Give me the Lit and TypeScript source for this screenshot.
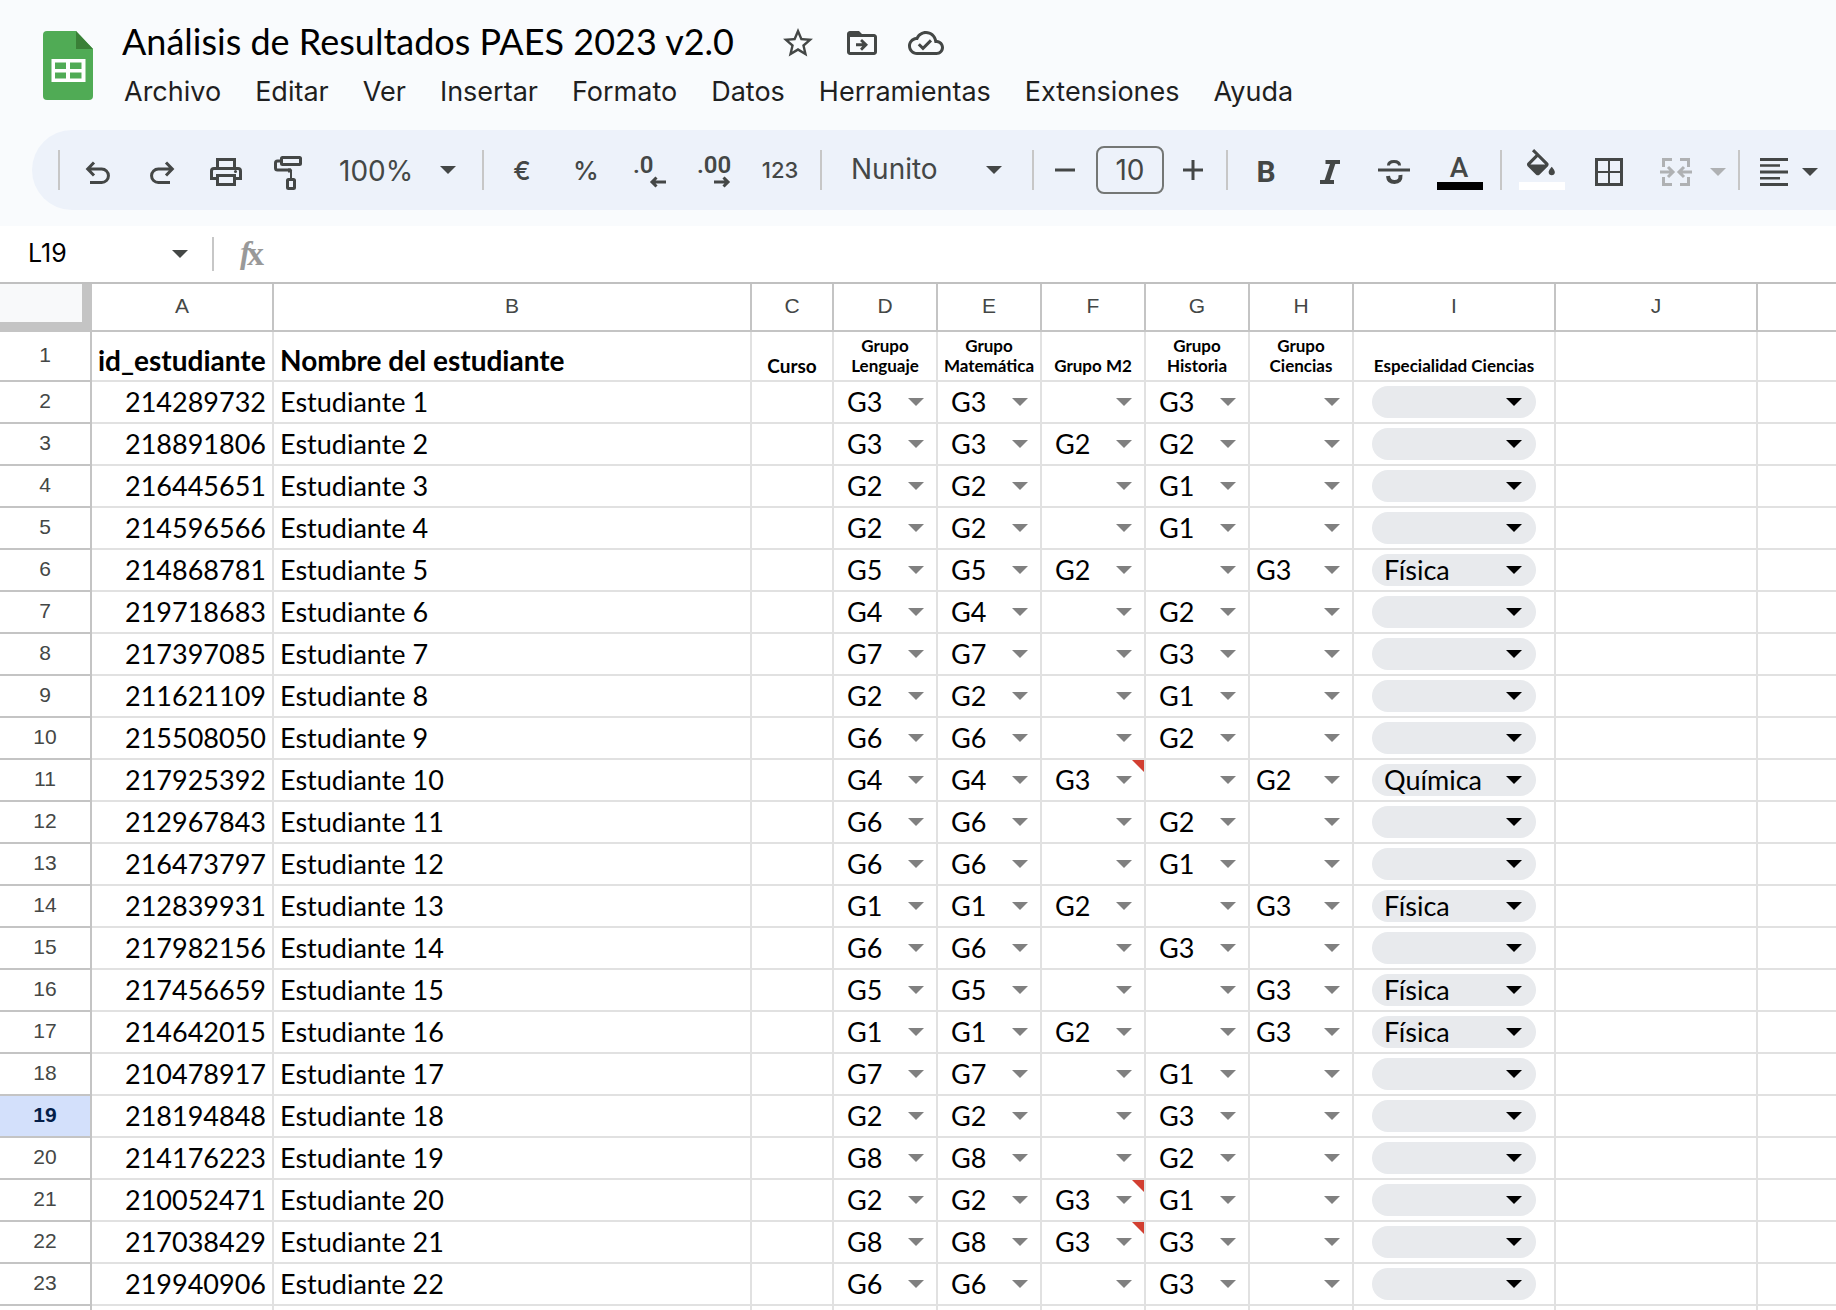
import { LitElement, html, svg, css, nothing, TemplateResult } from "lit";
import { classMap } from "lit/directives/class-map.js";

type Row = {
  id: string;
  groups: [string, string, string, string, string];
  chip: string;
  noted?: boolean;
};

const row = (id: string, l: string, m: string, m2: string, h: string, c: string, chip = "", noted = false): Row => ({
  id,
  groups: [l, m, m2, h, c],
  chip,
  noted,
});

const ROWS: Row[] = [
  row("214289732", "G3", "G3", "", "G3", ""),
  row("218891806", "G3", "G3", "G2", "G2", ""),
  row("216445651", "G2", "G2", "", "G1", ""),
  row("214596566", "G2", "G2", "", "G1", ""),
  row("214868781", "G5", "G5", "G2", "", "G3", "Física"),
  row("219718683", "G4", "G4", "", "G2", ""),
  row("217397085", "G7", "G7", "", "G3", ""),
  row("211621109", "G2", "G2", "", "G1", ""),
  row("215508050", "G6", "G6", "", "G2", ""),
  row("217925392", "G4", "G4", "G3", "", "G2", "Química", true),
  row("212967843", "G6", "G6", "", "G2", ""),
  row("216473797", "G6", "G6", "", "G1", ""),
  row("212839931", "G1", "G1", "G2", "", "G3", "Física"),
  row("217982156", "G6", "G6", "", "G3", ""),
  row("217456659", "G5", "G5", "", "", "G3", "Física"),
  row("214642015", "G1", "G1", "G2", "", "G3", "Física"),
  row("210478917", "G7", "G7", "", "G1", ""),
  row("218194848", "G2", "G2", "", "G3", ""),
  row("214176223", "G8", "G8", "", "G2", ""),
  row("210052471", "G2", "G2", "G3", "G1", "", "", true),
  row("217038429", "G8", "G8", "G3", "G3", "", "", true),
  row("219940906", "G6", "G6", "", "G3", ""),
];

const MENUS = ["Archivo", "Editar", "Ver", "Insertar", "Formato", "Datos", "Herramientas", "Extensiones", "Ayuda"];
const COLUMNS = ["A", "B", "C", "D", "E", "F", "G", "H", "I", "J"];
const GROUP_NAMES = ["Grupo Lenguaje", "Grupo Matemática", "Grupo M2", "Grupo Historia", "Grupo Ciencias"];

const arrowDown = html`<svg class="caret" viewBox="0 0 16 8" aria-hidden="true"><path d="M0 0H16L8 8Z" /></svg>`;

/* Toolbar icons share a 40 x 40 canvas. */
const icons: Record<string, TemplateResult> = {
  undo: svg`<path class="line" d="M16 12.5 9.7 19 16 25.5M10 19H23.7a6.7 6.7 0 0 1 0 13.5H12" />`,
  redo: svg`<path class="line" d="M24 12.5 30.3 19 24 25.5M30 19H16.3a6.7 6.7 0 0 0 0 13.5H28" />`,
  print: svg`<path class="line" d="M11.5 18V9.5h17V18M10 28.5H5.5V21q0-2.5 2.5-2.5H32q2.5 0 2.5 2.5v7.500H30M11.5 25.500h17v9h-17z" /><circle cx="29.500" cy="21.500" r="1.500" />`,
  paint: svg`<rect class="line" x="11.5" y="7.500" width="19" height="7" rx="1" /><path class="line" d="M10.500 11H7.500q-2 0-2 2v5q0 2 2 2H21" /><path d="M20 20h2v9h-2z" /><path d="M18 18.500h2q2 0 2 2v2h-4z" /><rect class="line" x="17.500" y="29.500" width="7" height="9" rx="1" />`,
  decLess: svg`<text class="dec" x="3" y="23">.0</text><path class="line" d="M36 32H22M26.500 27.500 22 32l4.500 4.500" />`,
  decMore: svg`<text class="dec" x="3" y="23">.00</text><path class="line" d="M20 32H34M29.500 27.500 34 32l-4.500 4.500" />`,
  minus: svg`<path d="M10 18.500h20v3H10z" />`,
  plus: svg`<path d="M8 18.500h8.500V10h3v8.500H28v3h-8.500V30h-3v-8.500H8z" />`,
  bold: svg`<text class="bold" x="20" y="32">B</text>`,
  italic: svg`<path d="M15.500 10H30v4h-4.700l-5.300 16H24v4H10v-4h4.700L20 14h-4.500z" />`,
  strike: svg`<path d="M4 18.500h32v3H4z" /><path class="line" d="M14.500 15.500q0-4 5.500-4t5.500 4" /><path class="line wide" d="M14 26q.5 6 6.500 6 6.500 0 6-7" />`,
  textColor: svg`<text class="letter" x="19" y="27">A</text><path class="ink" d="M-3 32h46v8H-3z" />`,
  fill: svg`<path transform="translate(.3 -1) scale(1.55)" d="M16.560 8.940 7.620 0 6.210 1.410l2.380 2.380-5.150 5.150c-.59.59-.59 1.540 0 2.120l5.500 5.500c.29.29.68.44 1.060.44s.77-.15 1.060-.44l5.500-5.500c.59-.58.59-1.530 0-2.120zM5.210 10 10 5.210 14.790 10zM19 11.500s-2 2.170-2 3.500c0 1.100.9 2 2 2s2-.9 2-2c0-1.330-2-3.500-2-3.500z" /><path class="paper" d="M-3 32h46v8H-3z" />`,
  borders: svg`<path class="line" d="M7.500 9.500h25v25h-25z" /><path class="line thin" d="M20 9.500v25M7.500 22h25" />`,
  merge: svg`<path class="line" d="M16 9.500H7.500V17M7.500 27v7.500H16M24 9.500h8.500V17M32.500 27v7.500H24M4 22h12M12 17l5 5-5 5M36 22H24M28 17l-5 5 5 5" />`,
  align: svg`<path d="M6 8h28v3H6zM6 14.200h20v2.600H6zM6 20.500h28v3H6zM6 27h20v2.600H6zM6 33h28v3H6z" />`,
};

class AppRoot extends LitElement {
  static styles = css`
    :host {
      display: flex;
      flex-direction: column;
      height: 100vh;
      overflow: hidden;
      background: #fff;
      color: #000;
      font-family: Inter, "Liberation Sans", sans-serif;
    }
    * {
      box-sizing: border-box;
    }
    button,
    select,
    input {
      margin: 0;
      padding: 0;
      border: 0;
      background: none;
      color: inherit;
      font: inherit;
      appearance: none;
      outline: none;
    }
    svg {
      display: block;
      flex: none;
      fill: currentColor;
    }
    .top {
      flex: none;
      padding: 20px 0 16px;
      background: #f9fbfd;
    }
    .header {
      display: flex;
      height: 110px;
      padding-left: 42px;
    }
    .logo {
      width: 52px;
      height: 70px;
      margin-top: 11px;
    }
    .heading {
      margin-left: 28px;
    }
    .title-row {
      display: flex;
      align-items: center;
      gap: 28px;
      height: 46px;
      color: #444746;
    }
    .title {
      width: 630px;
      padding-bottom: 4px;
      color: #000;
      font: 36px/44px Lato, sans-serif;
    }
    .title-icon {
      width: 36px;
      height: 36px;
    }
    .menu {
      display: flex;
      margin-left: -15px;
      color: #1f1f1f;
      font-size: 27px;
      line-height: 52px;
    }
    .menu button {
      padding: 0 17px;
    }
    .toolbar {
      display: flex;
      align-items: center;
      height: 80px;
      margin-left: 32px;
      padding-left: 20px;
      overflow: hidden;
      border-radius: 40px 0 0 40px;
      background: #edf2fa;
      color: #444746;
      font-size: 28px;
    }
    .rule {
      flex: none;
      width: 2px;
      height: 40px;
      margin: 0 6px;
      background: #c7c7c7;
    }
    .tool {
      display: flex;
      flex: none;
      align-items: center;
      justify-content: center;
      width: 64px;
      height: 80px;
    }
    .tool.medium {
      width: 66px;
    }
    .tool.roomy {
      width: 68px;
    }
    .tool.snug {
      width: 56px;
    }
    .tool.close {
      width: 50px;
    }
    .tool.drop {
      justify-content: flex-start;
      width: 22px;
      padding-top: 4px;
    }
    .tool.small {
      font-size: 22px;
      font-weight: 500;
    }
    .tool.sign {
      font-size: 26px;
      font-weight: 500;
    }
    .tool.off {
      color: #afb1b3;
    }
    .icon {
      width: 40px;
      height: 40px;
      overflow: visible;
    }
    .line {
      fill: none;
      stroke: currentColor;
      stroke-width: 3;
    }
    .line.thin {
      stroke-width: 2;
    }
    .line.wide {
      stroke-width: 4;
    }
    .ink {
      fill: #000;
    }
    .paper {
      fill: #fff;
    }
    .dec {
      font: 600 24px Roboto, sans-serif;
    }
    .bold {
      font: 700 30px Roboto, sans-serif;
      text-anchor: middle;
    }
    .letter {
      font: 500 28px Roboto, sans-serif;
      text-anchor: middle;
    }
    .combo {
      display: grid;
      flex: none;
      align-items: center;
      grid-template-columns: 1fr;
    }
    .combo > * {
      grid-area: 1 / 1;
    }
    .combo select {
      width: 100%;
    }
    .combo .caret {
      justify-self: end;
      pointer-events: none;
    }
    .caret {
      width: 16px;
      height: 8px;
    }
    .zoom {
      width: 154px;
    }
    .zoom select {
      padding: 2px 0 0 17px;
    }
    .zoom .caret {
      margin-right: 20px;
    }
    .font {
      width: 198px;
    }
    .font select {
      padding: 0 0 2px 23px;
    }
    .font .caret {
      margin-right: 24px;
    }
    .size {
      width: 68px;
      height: 48px;
      margin: 0 6px;
      border: 2px solid #747775;
      border-radius: 8px;
      text-align: center;
    }
    .formula {
      display: flex;
      flex: none;
      align-items: center;
      height: 56px;
      padding-left: 28px;
      color: #444746;
    }
    .name {
      width: 144px;
      padding-bottom: 2px;
      color: #000;
      font-size: 25px;
    }
    .name-drop {
      width: 34px;
    }
    .formula .rule {
      height: 34px;
    }
    .fx-icon {
      width: 40px;
      height: 40px;
      margin-left: 10px;
      overflow: visible;
      color: #999;
    }
    .fx-f {
      font: italic 700 32px "Liberation Serif", serif;
    }
    .fx-x {
      font: 700 34px "Liberation Serif", serif;
    }
    .entry {
      flex: 1;
      height: 40px;
      font-size: 24px;
    }
    .sheet {
      flex: 1;
      min-height: 0;
      overflow: hidden;
      border-top: 2px solid #c0c0c0;
    }
    table {
      width: 100%;
      table-layout: fixed;
      border-collapse: separate;
      border-spacing: 0;
      font: 27px/40px Lato, sans-serif;
    }
    th,
    td {
      height: 42px;
      padding: 0;
      border: solid #e1e1e1;
      border-width: 0 2px 2px 0;
      overflow: hidden;
      white-space: nowrap;
      font-weight: 400;
      text-align: left;
    }
    .c-head {
      width: 92px;
    }
    .c-id {
      width: 182px;
    }
    .c-name {
      width: 478px;
    }
    .c-curso {
      width: 82px;
    }
    .c-group {
      width: 104px;
    }
    .c-wide {
      width: 202px;
    }
    .letters th,
    .num {
      border-color: #c4c4c4;
      color: #444746;
      font: 21px/38px "Liberation Sans", sans-serif;
      text-align: center;
    }
    .letters th {
      height: 48px;
      padding-bottom: 2px;
    }
    th:last-child,
    td:last-child {
      border-right-width: 0;
    }
    .letters .corner {
      padding: 0;
      border-width: 0 10px 10px 0;
      background: #f8f9fa;
    }
    .num {
      padding-bottom: 2px;
    }
    .num.current {
      background: #d3e0fb;
      color: #041e49;
      font-weight: 700;
    }
    .titles td {
      height: 50px;
      padding: 0 6px;
      font-size: 28px;
      font-weight: 700;
      vertical-align: bottom;
    }
    .titles .mini {
      padding: 0 0 4px;
      font: 700 17px/20px Lato, sans-serif;
      text-align: center;
      white-space: normal;
    }
    .titles .mini.curso {
      font-size: 19px;
    }
    .titles .mini.group {
      padding: 0 5px 4px;
    }
    .id {
      padding-right: 6px;
      text-align: right;
    }
    .student {
      padding-left: 6px;
    }
    .cell {
      position: relative;
    }
    .cell select {
      height: 40px;
      padding-left: 13px;
      line-height: 40px;
    }
    .cell.start select {
      padding-left: 6px;
    }
    .cell .caret {
      margin-right: 12px;
      color: #808080;
    }
    .cell.noted::after {
      content: "";
      position: absolute;
      top: 0;
      right: 0;
      width: 12px;
      height: 12px;
      background: #d23f31;
      clip-path: polygon(0 0, 100% 0, 100% 100%);
    }
    .chip {
      margin: 0 18px;
      border-radius: 16px;
      background: #e8eaed;
    }
    .chip select {
      height: 32px;
      padding-left: 12px;
      line-height: 32px;
    }
    .chip .caret {
      margin-right: 14px;
    }
  `;

  private tool(name: string, label: string, extra = "") {
    return html`<button class="tool ${extra}" aria-label=${label}>
      <svg class="icon" viewBox="0 0 40 40" aria-hidden="true">${icons[name]}</svg>
    </button>`;
  }

  private rule() {
    return html`<span class="rule"></span>`;
  }

  private header() {
    return html`<header class="header">
      <svg class="logo" viewBox="0 0 52 70" aria-hidden="true">
        <path fill="#50ab55" d="M5 0H34L51 18V65q0 4-4 4H5q-4 0-4-4V4q0-4 4-4z" />
        <path fill="#3a8037" d="M34 0 51 18H34z" />
        <path fill="#fff" fill-rule="evenodd" d="M9.500 28h34v23h-34zM13 31.500v6.500h11v-6.500zM28 31.500v6.500h11.500v-6.500zM13 41.500v6h11v-6zM28 41.500v6h11.500v-6z" />
      </svg>
      <div class="heading">
        <div class="title-row">
          <input class="title" aria-label="Nombre del documento" .value=${"Análisis de Resultados PAES 2023 v2.0"} />
          <button aria-label="Destacar">
            <svg class="title-icon" viewBox="0 0 24 24"><path d="M22 9.240l-7.190-.62L12 2 9.190 8.630 2 9.240l5.460 4.730L5.820 21 12 17.270 18.180 21l-1.630-7.030L22 9.240zM12 15.400l-3.760 2.270 1-4.280-3.320-2.880 4.380-.38L12 6.100l1.710 4.040 4.380.38-3.320 2.880 1 4.280L12 15.400z" /></svg>
          </button>
          <button aria-label="Mover">
            <svg class="title-icon" viewBox="0 0 24 24"><path d="M20 6h-8l-2-2H4c-1.100 0-2 .9-2 2v12c0 1.100.9 2 2 2h16c1.100 0 2-.9 2-2V8c0-1.100-.9-2-2-2zm0 12H4V8h16v10zM8 12.100h4.200L10.700 10.600 12 9.300l4 3.900-4 3.900-1.300-1.300 1.500-1.600H8z" /></svg>
          </button>
          <button aria-label="Estado del documento">
            <svg class="title-icon" viewBox="0 0 24 24"><path d="M19.350 10.040C18.670 6.590 15.640 4 12 4 9.110 4 6.610 5.640 5.360 8.040 2.350 8.360 0 10.900 0 14c0 3.310 2.690 6 6 6h13c2.760 0 5-2.240 5-5 0-2.640-2.050-4.780-4.650-4.960zM19 18H6c-2.210 0-4-1.790-4-4 0-2.050 1.530-3.760 3.560-3.970l1.070-.11.5-.95C8.080 7.140 9.940 6 12 6c2.620 0 4.880 1.860 5.390 4.430l.3 1.500 1.530.11c1.560.1 2.780 1.410 2.780 2.960 0 1.650-1.350 3-3 3zm-9-3.820l-2.090-2.090L6.500 13.500 10 17l6.010-6.010-1.410-1.410z" /></svg>
          </button>
        </div>
        <nav class="menu">${MENUS.map((m) => html`<button>${m}</button>`)}</nav>
      </div>
    </header>`;
  }

  private toolbar() {
    return html`<div class="toolbar" role="toolbar">
      ${this.rule()} ${this.tool("undo", "Deshacer")} ${this.tool("redo", "Rehacer")} ${this.tool("print", "Imprimir")}
      ${this.tool("paint", "Copiar formato")}
      <span class="combo zoom"><select aria-label="Zoom"><option>100%</option></select>${arrowDown}</span>
      ${this.rule()}
      <button class="tool sign">€</button>
      <button class="tool sign">%</button>
      ${this.tool("decLess", "Menos decimales")} ${this.tool("decMore", "Más decimales")}
      <button class="tool roomy small">123</button>
      ${this.rule()}
      <span class="combo font"><select aria-label="Fuente"><option>Nunito</option></select>${arrowDown}</span>
      ${this.rule()} ${this.tool("minus", "Reducir tamaño", "close")}
      <input class="size" aria-label="Tamaño de fuente" .value=${"10"} />
      ${this.tool("plus", "Aumentar tamaño", "close")} ${this.rule()} ${this.tool("bold", "Negrita")}
      ${this.tool("italic", "Cursiva")} ${this.tool("strike", "Tachado")}
      ${this.tool("textColor", "Color de texto", "roomy")} ${this.rule()}
      ${this.tool("fill", "Color de relleno", "roomy")} ${this.tool("borders", "Bordes", "medium")}
      ${this.tool("merge", "Combinar celdas", "roomy off")}
      <button class="tool drop off" aria-label="Tipo de combinación">${arrowDown}</button>
      ${this.rule()} ${this.tool("align", "Alinear", "snug")}
      <button class="tool drop" aria-label="Opciones de alineación">${arrowDown}</button>
    </div>`;
  }

  private formula() {
    return html`<div class="formula">
      <input class="name" aria-label="Cuadro de nombres" .value=${"L19"} />
      <button class="name-drop" aria-label="Rangos con nombre">${arrowDown}</button>
      ${this.rule()}
      <svg class="fx-icon" viewBox="0 0 40 40" aria-hidden="true">
        <text class="fx-f" x="10" y="29">f</text>
        <text class="fx-x" x="17" y="31">x</text>
      </svg>
      <input class="entry" aria-label="Barra de fórmulas" />
    </div>`;
  }

  private pick(value: string, label: string, options: string[]) {
    return html`<select aria-label=${label}>
        <option></option>
        ${options.map((o) => html`<option ?selected=${o === value}>${o}</option>`)}</select
      >${arrowDown}`;
  }

  private dataRow(r: Row, i: number) {
    return html`<tr>
      <th class=${classMap({ num: true, current: i === 17 })} scope="row">${i + 2}</th>
      <td class="id">${r.id}</td>
      <td class="student">Estudiante ${i + 1}</td>
      <td></td>
      ${r.groups.map(
        (g, k) => html`<td>
          <div class=${classMap({ combo: true, cell: true, start: k === 4, noted: k === 2 && !!r.noted })}>
            ${this.pick(g, GROUP_NAMES[k], g ? [g] : [])}
          </div>
        </td>`
      )}
      <td><div class="combo chip">${this.pick(r.chip, "Especialidad Ciencias", r.chip ? [r.chip] : [])}</div></td>
      <td></td>
      <td></td>
    </tr>`;
  }

  render() {
    return html`
      <div class="top">${this.header()} ${this.toolbar()}</div>
      ${this.formula()}
      <main class="sheet">
        <table>
          <colgroup>
            <col class="c-head" /><col class="c-id" /><col class="c-name" /><col class="c-curso" />
            ${GROUP_NAMES.map(() => html`<col class="c-group" />`)}
            <col class="c-wide" /><col class="c-wide" /><col />
          </colgroup>
          <thead>
            <tr class="letters">
              <th class="corner"></th>
              ${COLUMNS.map((c) => html`<th scope="col">${c}</th>`)}
              <th></th>
            </tr>
          </thead>
          <tbody>
            <tr class="titles">
              <th class="num" scope="row">1</th>
              <td>id_estudiante</td>
              <td>Nombre del estudiante</td>
              <td class="mini curso">Curso</td>
              ${GROUP_NAMES.map((g) => html`<td class="mini group">${g}</td>`)}
              <td class="mini">Especialidad Ciencias</td>
              <td></td>
              <td></td>
            </tr>
            ${ROWS.map((r, i) => this.dataRow(r, i))}
            <tr>
              <th class="num"></th>
              ${[...COLUMNS, nothing].map(() => html`<td></td>`)}
            </tr>
          </tbody>
        </table>
      </main>
    `;
  }
}

customElements.define("app-root", AppRoot);
